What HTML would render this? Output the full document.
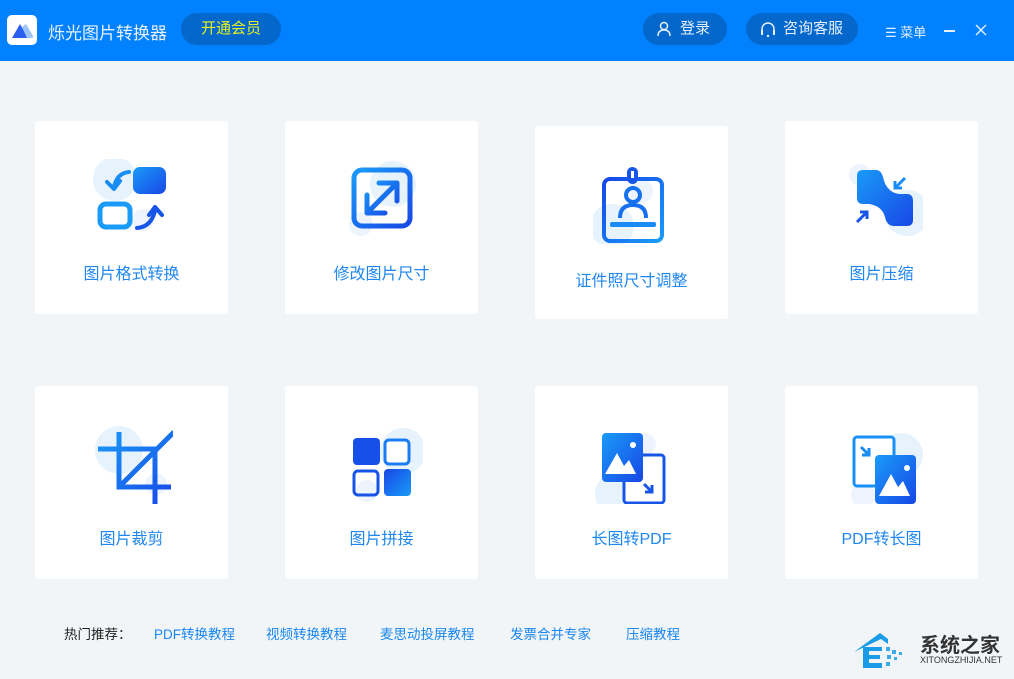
<!DOCTYPE html>
<html><head><meta charset="utf-8"><style>
*{margin:0;padding:0;box-sizing:border-box}
body{width:1014px;height:679px;background:#f2f5f7;font-family:"Liberation Sans","Noto Sans CJK SC",sans-serif;position:relative;overflow:hidden}
.hd{position:absolute;left:0;top:0;width:1014px;height:61px;background:#0181fe}
.logo{position:absolute;left:7px;top:15px;width:30px;height:30px;background:#fff;border-radius:5px}
.title{position:absolute;left:48px;top:19px;color:#e8f2ff;font-size:17px}
.pill{position:absolute;top:13px;height:32px;border-radius:16px;background:#0467cc;color:#e6f0ff;font-size:15px;line-height:32px;text-align:center}
.card{position:absolute;width:193px;height:193px;background:#fff;border-radius:3px}
.card svg{position:absolute;left:58px;top:38px}
.card .t{position:absolute;left:0;width:100%;top:139px;text-align:center;color:#1f87ef;font-size:16px}
.ft{position:absolute;top:623px;font-size:13.5px;color:#1a87f0}
</style></head><body>
<svg width="0" height="0" style="position:absolute"><defs>
<linearGradient id="g" x1="0" y1="0" x2="1" y2="1"><stop offset="0" stop-color="#1a9bf8"/><stop offset="1" stop-color="#1747e6"/></linearGradient>
<linearGradient id="g2" x1="0" y1="0" x2="1" y2="1"><stop offset="0" stop-color="#1747e6"/><stop offset="1" stop-color="#1a9bf8"/></linearGradient>
</defs></svg>
<div class="hd">
<div class="logo"><svg width="30" height="30"><path d="M5 23 L13 9 L21 23 Z" fill="#2a5ff0"/><path d="M15 12 L19 9 L26 21 Q27 23 24 23 L20 23 Z" fill="#9cc4f8"/></svg></div>
<div class="title">烁光图片转换器</div>
<div class="pill" style="left:181px;width:100px;color:#e8f020">开通会员</div>
<div class="pill" style="left:643px;width:84px;padding-left:20px">登录</div>
<svg style="position:absolute;left:656px;top:21px" width="16" height="16"><circle cx="8" cy="5" r="3.5" fill="none" stroke="#e6f0ff" stroke-width="1.5"/><path d="M2 15 Q2 9 8 9 Q14 9 14 15" fill="none" stroke="#e6f0ff" stroke-width="1.5"/></svg>
<div class="pill" style="left:746px;width:112px;padding-left:22px">咨询客服</div>
<svg style="position:absolute;left:759px;top:21px" width="18" height="17"><path d="M3 10 V8 A6 6 0 0 1 15 8 V10" fill="none" stroke="#e6f0ff" stroke-width="1.5"/><rect x="2" y="9" width="2" height="5" fill="#e6f0ff"/><rect x="14" y="9" width="2" height="5" fill="#e6f0ff"/><circle cx="9" cy="15" r="1.2" fill="#e6f0ff"/></svg>
<div style="position:absolute;left:885px;top:22px;color:#e6f0ff;font-size:13px">☰ 菜单</div>
<div style="position:absolute;left:944px;top:30px;width:11px;height:1.5px;background:#e6f0ff"></div>
<svg style="position:absolute;left:975px;top:24px" width="12" height="12"><path d="M1 1L11 11M11 1L1 11" stroke="#e6f0ff" stroke-width="1.4"/></svg>
</div>

<div class="card" style="left:35px;top:121px"><svg width="80" height="80"><circle cx="22" cy="20" r="22" fill="#e6f3fd"/><circle cx="50" cy="61" r="11" fill="#eef4fe"/><rect x="40" y="8" width="33" height="27" rx="7" fill="url(#g)"/><rect x="7" y="45" width="30" height="23" rx="6" fill="none" stroke="#1a9bf8" stroke-width="5"/><path d="M36 13 Q24 14 21 28" fill="none" stroke="#1a8df5" stroke-width="4" stroke-linecap="round"/><path d="M14 23 L21 30 L27 22" fill="none" stroke="#1a8df5" stroke-width="4" stroke-linecap="round" stroke-linejoin="round"/><path d="M44 69 Q58 68 62 52" fill="none" stroke="#1755e8" stroke-width="4" stroke-linecap="round"/><path d="M56 56 L62 48 L69 56" fill="none" stroke="#1755e8" stroke-width="4" stroke-linecap="round" stroke-linejoin="round"/></svg><div class="t">图片格式转换</div></div>

<div class="card" style="left:285px;top:121px"><svg width="80" height="80"><circle cx="50" cy="25" r="23" fill="#e6f3fd"/><circle cx="18" cy="65" r="12" fill="#eef4fe"/><rect x="11" y="11" width="56" height="56" rx="8" fill="none" stroke="url(#g)" stroke-width="5"/><path d="M24 54 L54 24 M36 24 H54 V42 M24 36 V54 H42" fill="none" stroke="url(#g)" stroke-width="5" stroke-linecap="round" stroke-linejoin="round"/></svg><div class="t">修改图片尺寸</div></div>

<div class="card" style="left:535px;top:126px"><svg width="80" height="80"><circle cx="19" cy="62" r="22" fill="#e6f3fd"/><circle cx="48" cy="27" r="12" fill="#eef4fe"/><rect x="11" y="15" width="58" height="62" rx="6" fill="none" stroke="url(#g2)" stroke-width="4"/><rect x="34" y="3" width="11" height="17" rx="5.5" fill="#1755e8"/><rect x="38" y="7" width="3" height="7" fill="#fff"/><circle cx="40" cy="31" r="7" fill="none" stroke="#1770ee" stroke-width="4"/><path d="M27 54 Q27 41 40 41 Q53 41 53 54" fill="none" stroke="#1770ee" stroke-width="4"/><rect x="17" y="58" width="46" height="5" rx="2" fill="#1a8af5"/></svg><div class="t" style="top:141px">证件照尺寸调整</div></div>

<div class="card" style="left:785px;top:121px"><svg width="80" height="80"><circle cx="64" cy="54" r="23" fill="#e6f3fd"/><circle cx="17" cy="16" r="11" fill="#eef4fe"/><path d="M14 17 Q14 11 20 11 H33 Q38 11 40 18 Q43 33 56 35 H64 Q70 35 70 42 V61 Q70 67 64 67 H51 Q44 67 42 58 Q39 47 26 45 H20 Q14 45 14 39 Z" fill="url(#g)"/><path d="M52 29 L62 19 M52 22 V29 H59" fill="none" stroke="#1a8df5" stroke-width="3"/><path d="M14 63 L24 53 M17 53 H24 V60" fill="none" stroke="#1755e8" stroke-width="3"/></svg><div class="t">图片压缩</div></div>

<div class="card" style="left:35px;top:386px"><svg width="80" height="80"><circle cx="26" cy="26" r="24" fill="#e6f3fd"/><circle cx="63" cy="60" r="11" fill="#eef4fe"/><path d="M26 8 V63 H78 M5 25 H62 V80 M28 61 L81 8" fill="none" stroke="url(#g)" stroke-width="5"/></svg><div class="t">图片裁剪</div></div>

<div class="card" style="left:285px;top:386px"><svg width="80" height="80"><circle cx="60" cy="27" r="23" fill="#e6f3fd"/><circle cx="24" cy="67" r="11" fill="#eef4fe"/><rect x="10" y="14" width="27" height="27" rx="4" fill="#1750e8"/><rect x="42" y="16" width="24" height="24" rx="4" fill="#fff" stroke="#1a7cf2" stroke-width="3"/><rect x="11" y="47" width="24" height="24" rx="4" fill="none" stroke="#1755e8" stroke-width="3"/><rect x="41" y="45" width="27" height="27" rx="4" fill="url(#g2)"/></svg><div class="t">图片拼接</div></div>

<div class="card" style="left:535px;top:386px"><svg width="80" height="80"><circle cx="24" cy="70" r="22" fill="#e6f3fd"/><circle cx="52" cy="20" r="11" fill="#eef4fe"/><rect x="31" y="41" width="40" height="48" rx="3" fill="#fff" stroke="#1755e8" stroke-width="3" transform="translate(0,-10)"/><rect x="9" y="9" width="41" height="49" rx="4" fill="url(#g)"/><circle cx="40" cy="21" r="3" fill="#fff"/><path d="M12 50 L24 29 L31 42 L36 36 L43 50 Z" fill="#fff"/><path d="M51 60 L59 68 M59 61 V68 H52" fill="none" stroke="#1755e8" stroke-width="3"/></svg><div class="t">长图转PDF</div></div>

<div class="card" style="left:785px;top:386px"><svg width="80" height="80"><circle cx="58" cy="31" r="22" fill="#e6f3fd"/><circle cx="20" cy="71" r="12" fill="#eef4fe"/><rect x="11" y="13" width="40" height="49" rx="3" fill="#fff" stroke="#1a90f6" stroke-width="3"/><path d="M18 23 L26 31 M26 24 V31 H19" fill="none" stroke="#1a8df5" stroke-width="3"/><rect x="32" y="36" width="41" height="49" rx="4" fill="url(#g)" transform="translate(0,-5)"/><circle cx="64" cy="44" r="3" fill="#fff"/><path d="M36 72 L48 50 L55 63 L60 57 L67 72 Z" fill="#fff"/></svg><div class="t">PDF转长图</div></div>

<div class="ft" style="left:64px;color:#222">热门推荐：</div>
<div class="ft" style="left:154px">PDF转换教程</div>
<div class="ft" style="left:266px">视频转换教程</div>
<div class="ft" style="left:380px">麦思动投屏教程</div>
<div class="ft" style="left:510px">发票合并专家</div>
<div class="ft" style="left:626px">压缩教程</div>

<svg style="position:absolute;left:852px;top:630px" width="60" height="40"><path d="M2 22 L28 3 L36 9 V14 L29 9 Z" fill="#1a9ce8"/><path d="M11 17 V38 H30 V33 H17 V29 H28 V25 H17 V21 H30 V17 Z" fill="#1a9ce8"/><g fill="#3aaae8"><rect x="34" y="17" width="4" height="4"/><rect x="40" y="20" width="4" height="4"/><rect x="35" y="25" width="4" height="4"/><rect x="42" y="27" width="3" height="3"/><rect x="34" y="32" width="4" height="4"/><rect x="47" y="22" width="3" height="3"/></g></svg>
<div style="position:absolute;left:920px;top:629px;font-size:20px;font-weight:bold;color:#333">系统之家</div>
<div style="position:absolute;left:920px;top:655px;font-size:9px;color:#333">XITONGZHIJIA.NET</div>
</body></html>
